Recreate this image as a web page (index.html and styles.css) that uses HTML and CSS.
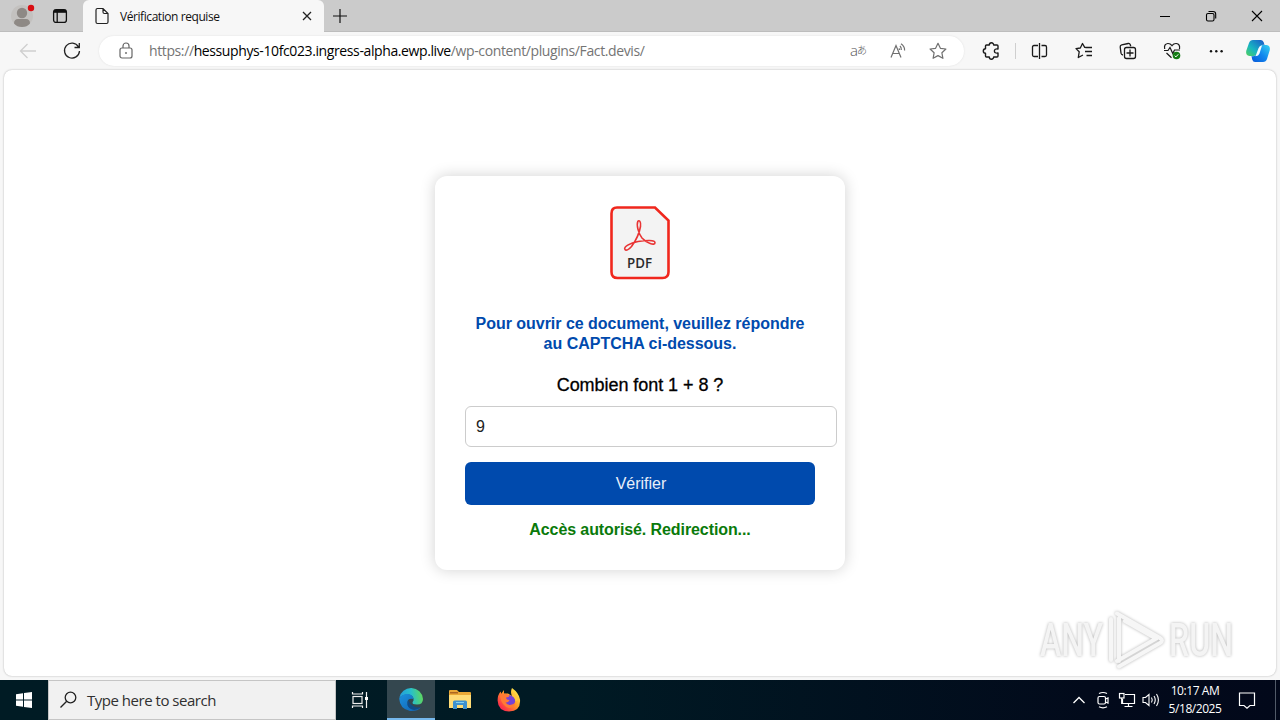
FILE: index.html
```html
<!DOCTYPE html>
<html lang="fr">
<head>
<meta charset="utf-8">
<title>Vérification requise</title>
<link rel="stylesheet" href="styles.css">
</head>
<body>
<div class="screen">
  <header class="tabstrip">
    <svg class="profile" width="28" height="32" viewBox="0 0 28 32"><circle cx="14" cy="16" r="11" fill="#c3c1bf"/><circle cx="14" cy="13" r="5.2" fill="#8e8985"/><path d="M6 23.500q0-4.500 4-4.500h8q4 0 4 4.500-3 3.500-8 3.500t-8-3.500z" fill="#8e8985"/><circle cx="23" cy="8" r="3.200" fill="#d90d12"/></svg>
    <svg class="workspace" width="16" height="16" viewBox="0 0 16 16" fill="none" stroke="#111" stroke-width="1.300"><rect x="1.600" y="1.600" width="12.800" height="12.800" rx="2.500"/><path d="M2 3.300h12" stroke-width="3"/><path d="M5.200 4v10"/></svg>
    <div class="tab">
      <svg width="16" height="18" viewBox="0 0 16 18" fill="none" stroke="#222" stroke-width="1.200"><path d="M2 3q0-1.500 1.500-1.500h5.500l5 5v8.500q0 1.500-1.500 1.500h-9q-1.500 0-1.500-1.500zM9 1.500v3.500q0 1.500 1.500 1.500h3.500"/></svg>
      <span class="tab-title">Vérification requise</span>
      <svg width="10" height="10" viewBox="0 0 10 10" stroke="#222" stroke-width="1.300"><path d="M1 1l8 8M9 1l-8 8"/></svg>
    </div>
    <svg class="plus" width="14" height="14" viewBox="0 0 14 14" stroke="#111" stroke-width="1.200"><path d="M7 0v14M0 7h14"/></svg>
    <div class="window-buttons">
      <svg width="12" height="12" viewBox="0 0 12 12" stroke="#000"><path d="M1 6.500h10"/></svg>
      <svg width="12" height="12" viewBox="0 0 12 12" fill="none" stroke="#000" stroke-width="1.100"><rect x="1.500" y="3.500" width="7.500" height="7.500" rx="1.500"/><path d="M3.500 1.500h4.500q2.700 0 2.700 2.700v4.300"/></svg>
      <svg width="12" height="12" viewBox="0 0 12 12" stroke="#000" stroke-width="1.100"><path d="M1 1l10 10M11 1L1 11"/></svg>
    </div>
  </header>

  <nav class="toolbar">
    <svg class="back" width="24" height="24" viewBox="0 0 24 24" fill="none" stroke="#cfcfcf" stroke-width="1.300"><path d="M20 12H4.500M11.500 5l-7 7 7 7"/></svg>
    <svg class="reload" width="24" height="24" viewBox="0 0 24 24" fill="none" stroke="#222" stroke-width="1.300"><path d="M18.500 7.800A7.500 7.500 0 1 0 19.500 12M19.300 4v4.500h-4.800"/></svg>
    <div class="address">
      <svg class="lock" width="24" height="24" viewBox="0 0 24 24" fill="none" stroke="#666" stroke-width="1.200"><rect x="6" y="9" width="12" height="10" rx="2"/><path d="M9 9V7a3 3 0 0 1 6 0v2"/><circle cx="12" cy="14" r=".7" fill="#666" stroke-width=".6"/></svg>
      <span class="url">https://<b>hessuphys-10fc023.ingress-alpha.ewp.live</b>/wp-content/plugins/Fact.devis/</span>
      <span class="translate">a<i>あ</i></span>
      <svg width="24" height="24" viewBox="0 0 24 24" fill="none" stroke="#707070" stroke-width="1.200"><path d="M5 18.500L10 6.500l5 12M6.800 14.500h6.400M14 7q1.500 1.500 1.300 4M15 4.800q3.800 2.500 3.600 6.700M12.800 9.500q.7.500.8 1.500"/></svg>
      <svg width="24" height="24" viewBox="0 0 24 24" fill="none" stroke="#707070" stroke-width="1.200" stroke-linejoin="round"><path d="M12 4.300l2.400 5 5.500.7-4 3.800 1 5.500-4.900-2.700-4.900 2.700 1-5.500-4-3.800 5.500-.7z"/></svg>
    </div>
    <div class="tools">
      <svg width="24" height="24" viewBox="0 0 24 24" fill="none" stroke="#1a1a1a" stroke-width="1.400" stroke-linejoin="round"><path d="M7.500 6h2.800a2.200 2.200 0 0 1 4.400 0h3.300q1 0 1 1v3q-3.600-.5-3.600 2t3.600 2v3q0 1-1 1h-3.300a2.200 2.200 0 0 1-4.400 0H7.500q-1 0-1-1v-2.800a2.200 2.200 0 0 1 0-4.400V7q0-1 1-1z"/></svg>
      <span class="divider"></span>
      <svg width="24" height="24" viewBox="0 0 24 24" fill="none" stroke="#1a1a1a" stroke-width="1.300"><path d="M10 6.500H6q-1.500 0-1.500 1.500v8q0 1.500 1.500 1.500H10M13.500 6.500h3.500q1.500 0 1.500 1.500v8q0 1.500-1.500 1.500h-3.500M11.500 4v16"/></svg>
      <svg width="24" height="24" viewBox="0 0 24 24" fill="none" stroke="#1a1a1a" stroke-width="1.300" stroke-linejoin="round"><path d="M14 8.500l-1.300-.2L10.500 4.500 8.300 9l-4.300.6 3.200 3.200-.9 5.700 4.700-2.500M14 8.500h6M13 12.500h7M14.500 16.500H20"/></svg>
      <svg width="24" height="24" viewBox="0 0 24 24" fill="none" stroke="#1a1a1a" stroke-width="1.300"><path d="M7 16q-1.700-.2-2-1.800L4.200 8q-.2-1.700 1.500-2.100l6.500-1.400q1.500-.3 2.100 1.300l.4 1.400"/><rect x="8.500" y="8.500" width="11" height="11" rx="2"/><path d="M14 10.500v7M10.500 14h7"/></svg>
      <svg width="24" height="24" viewBox="0 0 24 24" fill="none" stroke="#1a1a1a" stroke-width="1.200"><path d="M4.700 10q-1-5 3-5.500 2.500-.2 4.300 2.200 1.800-2.400 4.300-2.200 4 .5 3.200 5.500M4 11.500h4l2-3 2.800 6 1.700-3.500h5.500M6.500 14l5 4.800"/><circle cx="16.500" cy="16.500" r="3.800" fill="#137c13" stroke="none"/><path d="M14.700 16.700l1.200 1.200 2.400-2.600" stroke="#fff" stroke-width="1"/></svg>
      <svg width="24" height="24" viewBox="0 0 24 24" fill="#111"><circle cx="7" cy="12.300" r="1.200"/><circle cx="12.300" cy="12.300" r="1.200"/><circle cx="17.600" cy="12.300" r="1.200"/></svg>
    </div>
    <svg class="copilot" width="26" height="24" viewBox="0 0 26 24">
      <defs><linearGradient id="cpA" x1="0" y1="1" x2="1" y2="0"><stop offset="0" stop-color="#52d05a"/><stop offset=".4" stop-color="#18b6c1"/><stop offset="1" stop-color="#1a55ca"/></linearGradient><linearGradient id="cpB" x1="0" y1="1" x2="1" y2="0"><stop offset="0" stop-color="#0757d8"/><stop offset=".5" stop-color="#1187ee"/><stop offset="1" stop-color="#35d3f0"/></linearGradient></defs>
      <path d="M8 1h8q2 0 2.800 2.500L19.500 6Q16 5 14.500 9l-2 5q-1 3-4 3H4.500Q.5 16.500 1.200 12L4 4q1-3 4-3z" fill="url(#cpA)"/>
      <path d="M18 23h-8q-2 0-2.800-2.500L6.500 17q4 1 5.500-3l2-5q1-3 4-3H21.500q4 .5 3.300 5L22 20q-1 3-4 3z" fill="url(#cpB)"/>
      <path d="M10.500 17.300l3-8q.9-2.500 3.500-2.800l-2.500 8q-.9 2.500-4 2.800z" fill="#f5fbff"/>
    </svg>
  </nav>

  <main class="page">
    <section class="card">
      <svg class="pdf" width="60" height="74" viewBox="0 0 60 74">
        <path d="M7 1.500h38L58.500 14.500V66q0 6-6 6H7.500q-6 0-6-6V7.500q0-6 5.500-6z" fill="#f3f3f3" stroke="#f0271d" stroke-width="2.600"/>
        <path d="M15 43.500c-2-2.500 5-6.500 13-8 8-1.300 17-1.800 17 1.200 0 3.300-8.500.5-13-4.700-4-5-5.500-13.500-4.200-16.500 1.200-2 3.500 0 2.700 5-1.500 8.500-6 16-9 20-3 3.500-5.500 4.500-6.500 3z" fill="none" stroke="#e93434" stroke-width="1.600"/>
        <text x="17" y="62.200" textLength="25" lengthAdjust="spacingAndGlyphs" class="pdf-label">PDF</text>
      </svg>
      <h1>Pour ouvrir ce document, veuillez répondre<br>au CAPTCHA ci-dessous.</h1>
      <label class="question" for="answer">Combien font 1 + 8 ?</label>
      <input class="answer" id="answer" type="text" value="9">
      <button class="verify" type="button">Vérifier</button>
      <p class="status">Accès autorisé. Redirection...</p>
    </section>
    <svg class="watermark" width="210" height="70" viewBox="0 0 210 70">
      <g class="watermark-text"><text x="5" y="51" textLength="63" lengthAdjust="spacingAndGlyphs">ANY</text><text x="134" y="51" textLength="64" lengthAdjust="spacingAndGlyphs">RUN</text></g>
      <g class="watermark-mark"><path d="M82 8.500l43 24.500q4 2.500 0 5L84 61.500M76 55V14M84 13v43M82 56l41-23.500M90 16l30 17"/></g>
    </svg>
  </main>

  <footer class="taskbar">
    <div class="start"><svg width="16" height="16" viewBox="0 0 16 16" fill="#fff"><path d="M0 2.200L7 1.200v6.300H0zM8 1l8-1v7.500H8zM0 8.500h7v6.300l-7-1zM8 8.500h8V16l-8-1z"/></svg></div>
    <div class="search"><svg width="18" height="18" viewBox="0 0 18 18" fill="none" stroke="#222" stroke-width="1.300"><circle cx="10.500" cy="6.500" r="5.300"/><path d="M6.700 10.300L.5 16.500"/></svg><span>Type here to search</span></div>
    <div class="task view"><svg width="18" height="18" viewBox="0 0 18 18" fill="none" stroke="#eee" stroke-width="1.200"><rect x="2" y="5.500" width="9" height="7"/><path d="M1.500 1v2h10V1M1.500 17v-2h10v2M15.500 1v16"/><path d="M14 6h3v3h-3z" fill="#fff" stroke="none"/></svg></div>
    <div class="task active">
      <svg width="26" height="26" viewBox="0 0 26 26"><defs><linearGradient id="edA" x1="0" y1=".4" x2="1" y2=".3"><stop offset="0" stop-color="#239bdc"/><stop offset=".5" stop-color="#28bfcb"/><stop offset="1" stop-color="#61d957"/></linearGradient><linearGradient id="edB" x1="0" y1="0" x2="1" y2="1"><stop offset="0" stop-color="#1b91df"/><stop offset="1" stop-color="#1160ad"/></linearGradient></defs>
      <path d="M1.200 12A12 12 0 0 1 25 13q0 5.500-6 5.500-5.500 0-4.300-2.500 1.300-1.500.8-3.500-.5-3-4.500-4-6-.7-9.800 3.500z" fill="url(#edA)"/><path d="M1.200 12.500Q4.500 7.500 10 8q5 .5 5.500 5-6.500-1-6 4 1 7.500 10.500 5.500 2-.5 3-1.300Q19.500 25.500 12 25 1.800 23 1.200 12.500z" fill="url(#edB)"/><path d="M10.500 14q-3 5 1.500 8.500 5 3.500 11-1.500-4 1.200-7.500-.8-4.500-2.400-5-6.200z" fill="#104b86"/></svg>
    </div>
    <div class="task"><svg width="22" height="20" viewBox="0 0 22 20"><path d="M0 1q0-1 1-1h7l2 2H21q1 0 1 1v15H0z" fill="#eaa937"/><path d="M0 5h22v13H0z" fill="#ffdc76"/><path d="M1 2h8v1.500H1z" fill="#ad6721"/><path d="M4 19v-7q0-1.500 1.500-1.500h11q1.500 0 1.500 1.500v7h-4v-4H8v4z" fill="#3e91cf"/><path d="M7 12h8v1H7z" fill="#83d0f1"/></svg></div>
    <div class="task"><svg width="24" height="24" viewBox="0 0 24 24"><defs><linearGradient id="ffA" x1="1" y1="0" x2="0" y2="1"><stop offset=".1" stop-color="#fff04d"/><stop offset=".45" stop-color="#ff9a25"/><stop offset=".8" stop-color="#fc3648"/><stop offset="1" stop-color="#ed1570"/></linearGradient></defs><path d="M15 0q7 5 8 11.500Q24 23 12 23.500 1 23 .6 12.500.6 7 3.500 3.500l.8 2.300L7 2v3.500h4L15 8q-2-4 0-8z" fill="url(#ffA)"/><circle cx="12.500" cy="13" r="5.700" fill="#7543d6"/><path d="M3 8q4-4 8.500-1l.8 1.500q-2 1-3.300 1 .2 2.500 3.500 2.500-1 2.800-4 2.500 2 3 5.500 2.300 3-.5 4-2.500 0 5.500-6 5.700Q4.500 18 3 8z" fill="#ff7a35"/><path d="M15 8q3 1 3.500 5.500L21 12q-1-5-5-7z" fill="#ffc83c"/></svg></div>
    <div class="tray">
      <svg width="24" height="24" viewBox="0 0 24 24" fill="none" stroke="#fff" stroke-width="1.300"><path d="M6.500 15l5.500-5.500 5.500 5.500"/></svg>
      <svg width="24" height="24" viewBox="0 0 24 24" fill="none" stroke="#fff" stroke-width="1.200"><rect x="7" y="8.500" width="7.500" height="7.500" rx="1.500"/><path d="M14.500 11l2.500-1v5l-2.500-1M8 5.500q4-2 8 0M8 18.800q4 2 8 0"/></svg>
      <svg width="24" height="24" viewBox="0 0 24 24" fill="none" stroke="#fff" stroke-width="1.200"><path d="M10 6.500h9.500v9H7.500V11M13.500 15.500v3M9.500 18.500h8"/><rect x="4.500" y="5.500" width="4.500" height="4.500"/><path d="M6.700 10v5.500h1"/></svg>
      <svg width="24" height="24" viewBox="0 0 24 24" fill="none" stroke="#fff" stroke-width="1.100"><path d="M4 9.500h2.500L10 6.500v11l-3.500-3H4zM12.500 9.500q1.500 2.500 0 5M15 8q2.500 4 0 8M17.500 6q3.800 6 0 12"/></svg>
      <div class="clock"><span class="time">10:17 AM</span><span>5/18/2025</span></div>
      <svg class="notice" width="24" height="24" viewBox="0 0 24 24" fill="none" stroke="#fff" stroke-width="1.200"><path d="M4.500 5h15v12.500H15l-3 2.700-3-2.700H4.500z"/></svg>
      <span class="show-desktop"></span>
    </div>
  </footer>
</div>
</body>
</html>
```
FILE: styles.css
```css
* { box-sizing: border-box; }
body { margin: 0; font-family: "Open Sans", "Noto Sans", sans-serif; color: #111; }
svg { display: block; flex: none; }
.screen { width: 1280px; height: 720px; display: flex; flex-direction: column; background: #f7f7f7; overflow: hidden; }

.tabstrip { height: 32px; display: flex; align-items: center; background: #cbcbcb; border-bottom: 1px solid #bdbdbd; flex: none; }
.profile { margin-left: 8px; }
.workspace { margin: 0 15px 0 16px; }
.tab { width: 241px; height: 32px; margin-bottom: -1px; display: flex; align-items: center; background: #f7f7f7; border-radius: 6px 6px 0 0; padding: 0 12px 0 11px; }
.tab-title { flex: 1; margin-left: 10px; font-size: 12px; letter-spacing: -0.43px; white-space: nowrap; }
.plus { margin-left: 9px; }
.window-buttons { margin-left: auto; margin-right: 17px; display: flex; gap: 34px; }

.toolbar { height: 38px; padding-bottom: 1px; display: flex; align-items: center; flex: none; }
.back { margin-left: 16px; }
.reload { margin-left: 20px; }
.address { width: 865px; height: 30px; margin-left: 15px; padding: 0 14px 0 15px; display: flex; align-items: center; gap: 16px; background: #fff; border-radius: 15px; box-shadow: 0 0 2px #dedede; }
.url { flex: 1; margin-left: -5px; font-size: 14px; letter-spacing: -0.39px; color: #747474; white-space: nowrap; }
.url b { font-weight: 400; color: #000; }
.translate { width: 24px; height: 24px; padding: 0 0 2px 4px; display: flex; align-items: center; font-size: 15px; font-weight: 300; line-height: 20px; color: #555; }
.translate i { font: normal 300 10px "Noto Sans CJK JP", sans-serif; margin-left: -1px; }
.tools { display: flex; align-items: center; gap: 20px; margin-left: 15px; }
.divider { width: 1px; height: 16px; margin: 0 -8px; background: #cfcfcf; }
.copilot { margin-left: 17px; }

.page { position: relative; width: 1272px; height: 606px; margin: 0 4px; padding-top: 106px; background: #fff; border-radius: 8px; box-shadow: 0 0 2px rgba(0,0,0,.3); flex: none; }
.card { width: 410px; height: 394px; margin: 0 auto; padding: 30px; display: flex; flex-direction: column; background: #fff; border-radius: 12px; box-shadow: 0 0 15px rgba(0,0,0,.18); font-family: "Liberation Sans", Arial, sans-serif; text-align: center; }
.pdf { align-self: center; }
.pdf-label { font: 600 15px "Open Sans", sans-serif; fill: #2b2b2b; }
.card h1 { margin: 34px -10px 0; font-size: 16px; line-height: 20px; letter-spacing: -0.02px; color: #004aad; white-space: nowrap; }
.question { margin-top: 21px; height: 21px; font-size: 18px; line-height: 21px; letter-spacing: -0.05px; color: #000; -webkit-text-stroke: 0.3px #000; }
.answer { width: 372px; height: 41px; margin: 10px 0 0; padding: 0 10px; border: 1px solid #ccc; border-radius: 6px; font: 16px "Liberation Sans", Arial, sans-serif; color: #222; background: #fff; outline: 0; flex: none; }
.verify { height: 43px; margin: 15px 0 0; padding: 0 0 0 2px; border: 0; border-radius: 6px; background: #004aad; color: #e8effa; font: 16px "Liberation Sans", Arial, sans-serif; flex: none; }
.status { margin: 15px 0 0; font-size: 16px; line-height: 20px; letter-spacing: -0.09px; font-weight: 700; color: #0a7a0a; }
.watermark { position: absolute; right: 31px; bottom: 1px; overflow: visible; filter: drop-shadow(0 0 1.5px rgba(0,0,0,.3)); }
.watermark-text { font: 500 46px Roboto, sans-serif; fill: #f4f4f4; }
.watermark-mark { fill: none; stroke: #f6f6f6; stroke-width: 4; stroke-linecap: round; stroke-linejoin: round; }

.taskbar { height: 40px; margin-top: 4px; display: flex; background: linear-gradient(90deg, #001b24 0, #001a24 45%, #020a1b 85%, #02081a 100%); flex: none; }
.start { width: 48px; display: flex; align-items: center; justify-content: center; }
.search { width: 288px; padding-left: 11px; display: flex; align-items: center; gap: 9px; background: #f1f1f1; border: 1px solid #c5c5c5; font-size: 15px; letter-spacing: -0.48px; color: #303030; }
.task { width: 49px; display: flex; align-items: center; justify-content: center; }
.view { width: 51px; padding-right: 3px; }
.active { width: 48px; background: #34474f; border-bottom: 2px solid #76b9ed; }
.tray { margin-left: auto; display: flex; align-items: center; color: #fff; }
.clock { width: 64px; display: flex; flex-direction: column; align-items: center; font-size: 12px; line-height: 18px; letter-spacing: -0.45px; white-space: nowrap; }
.time { letter-spacing: -0.42px; }
.notice { margin-left: 8px; }
.show-desktop { width: 5px; height: 40px; margin-left: 16px; border-left: 1px solid #515a68; }
```
